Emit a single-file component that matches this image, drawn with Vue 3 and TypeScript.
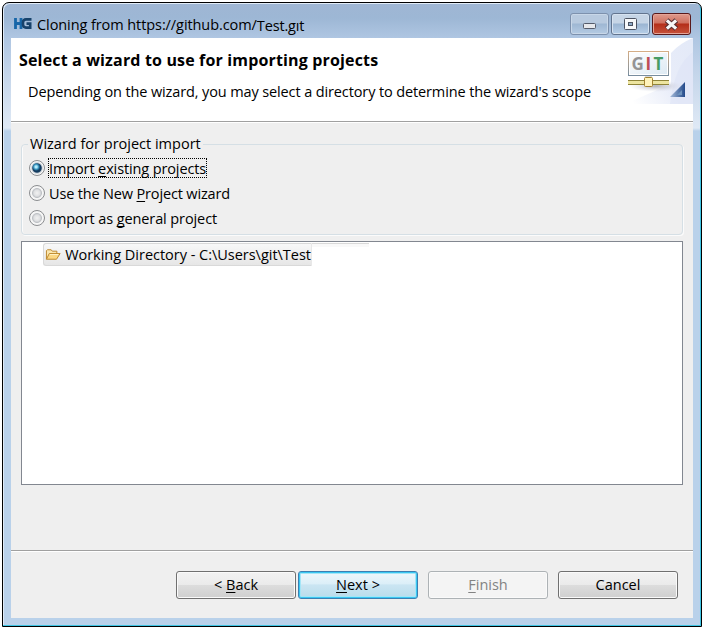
<script setup lang="ts">
import { ref } from 'vue'

interface WizardOption {
  id: string
  before: string
  key: string
  after: string
}

const options: WizardOption[] = [
  { id: 'existing', before: 'Import ', key: 'e', after: 'xisting projects' },
  { id: 'new', before: 'Use the New ', key: 'P', after: 'roject wizard' },
  { id: 'general', before: 'Import as ', key: 'g', after: 'eneral project' },
]

const selected = ref<string>('existing')
</script>

<template>
  <div class="desktop">
    <div class="window">
      <header class="titlebar">
        <svg class="app-icon" width="19" height="11" viewBox="0 0 19 11">
          <path d="M2.5 0v11M8 0v11M2 5.5h6" fill="none" stroke="#1766a8" stroke-width="2.8" />
          <path d="M18.5 1.4h-5.5q-3 0-3 3v2.2q0 3 3 3h4.2V5.6h-3.7" fill="none" stroke="#17426b" stroke-width="2.6" />
        </svg>
        <span class="title">Cloning from https://github.com/</span><span class="title repo">Test.gıt</span>
        <div class="controls">
          <button class="ctl" aria-label="Minimize">
            <svg width="15" height="14" viewBox="0 0 15 14">
              <rect x="1.5" y="6.5" width="12" height="5" rx="1" fill="#e6e8ec" stroke="#555c6b" />
            </svg>
          </button>
          <button class="ctl bright" aria-label="Maximize">
            <svg width="15" height="14" viewBox="0 0 15 14">
              <rect x="1.5" y="1.5" width="12" height="11" rx="1" fill="#f7f8fa" stroke="#4c5362" />
              <rect x="5.5" y="5.5" width="4" height="3" fill="#8eabc9" stroke="#4c5362" />
            </svg>
          </button>
          <button class="ctl close" aria-label="Close">
            <svg width="15" height="13" viewBox="0 0 15 13">
              <path d="M2.6 2.2l9.8 8.6M12.4 2.2l-9.8 8.6" stroke="#5a3033" stroke-width="5.4" />
              <path d="M2.9 2.4l9.2 8.2M12.1 2.4l-9.2 8.2" stroke="#f6f6f6" stroke-width="3.2" />
            </svg>
          </button>
        </div>
      </header>

      <main class="client">
        <section class="banner">
          <div class="banner-text">
            <h1>Select a wizard to use for importing projects</h1>
            <p>Depending on the wizard, you may select a directory to determine the wizard's scope</p>
          </div>
          <svg class="banner-art" width="72" height="66" viewBox="0 0 72 66">
            <defs>
              <linearGradient id="sky" x1="0" y1="0.8" x2="1" y2="0.2">
                <stop offset="0" stop-color="#fff" />
                <stop offset="0.5" stop-color="#e9edf9" />
                <stop offset="1" stop-color="#e4eaf8" />
              </linearGradient>
              <linearGradient id="board" x1="0" y1="0" x2="1" y2="1">
                <stop offset="0" stop-color="#fff" />
                <stop offset="1" stop-color="#dce9f3" />
              </linearGradient>
              <linearGradient id="edge" x1="0" y1="0" x2="0" y2="1">
                <stop offset="0" stop-color="#d4ad86" />
                <stop offset="1" stop-color="#788d9f" />
              </linearGradient>
              <linearGradient id="tri" x1="0" y1="0" x2="1" y2="0">
                <stop offset="0" stop-color="#a8bddb" />
                <stop offset="1" stop-color="#234a8a" />
              </linearGradient>
              <radialGradient id="shade">
                <stop offset="0" stop-color="#b0b1b8" />
                <stop offset="1" stop-color="#d8dbe7" stop-opacity="0" />
              </radialGradient>
            </defs>
            <path d="M72 0Q59 5 50 15V46L4 66H72Z" fill="url(#sky)" />
            <path d="M72 14Q54 26 49 66H72Z" fill="#dbe2f5" opacity=".5" />
            <ellipse cx="35" cy="48" rx="27" ry="6" fill="url(#shade)" />
            <rect x="7.5" y="13.5" width="40" height="24" fill="url(#board)" stroke="url(#edge)" />
            <rect x="8.5" y="14.5" width="38" height="22" fill="none" stroke="#fff" />
            <text class="git" x="10.5" y="32" fill="#949495">G</text>
            <text class="git" x="24.5" y="32" fill="#bf4d56">I</text>
            <text class="git" x="32.5" y="32" fill="#479c65">T</text>
            <path d="M7 44.5h41" stroke="#ede5a0" stroke-width="3" />
            <path d="M7 42.5h41M7 46.5h41" stroke="#8f8439" />
            <path d="M24 38h7v2h-7z" fill="#d8d8d5" />
            <rect x="23.5" y="39.5" width="8" height="9" rx="1" fill="#fff3ba" stroke="#a38331" />
            <path d="M64 44V59H49Z" fill="url(#tri)" />
            <path d="M61 52v5h-5z" fill="#6e93bd" />
          </svg>
        </section>

        <section class="body">
          <fieldset class="group">
            <legend>Wizard for project import</legend>
            <label v-for="o in options" :key="o.id" class="option" @click="selected = o.id">
              <span class="radio" :class="{ on: selected === o.id }"></span>
              <span class="caption" :class="[o.id, { focus: selected === o.id }]">{{ o.before }}<u>{{ o.key }}</u>{{ o.after }}</span>
            </label>
          </fieldset>

          <div class="tree">
            <div class="tree-row">
              <svg width="17" height="13" viewBox="0 0 17 13">
                <path d="M1.5 11.5v-9l1-1h4l1.2 1.5h4.8v3" fill="#fae6ae" stroke="#bc8528" />
                <path d="M1.5 11.5l3-6h11.4l-3.8 6z" fill="#fbd783" stroke="#bc8528" stroke-linejoin="round" />
                <path d="M5 6.5h9" stroke="#fff2c8" />
              </svg>
              <span>Working Directory - C:\Users\git\Test</span>
            </div>
            <div class="row-tail"></div>
          </div>
        </section>

        <footer class="actions">
          <button class="btn">&lt; <u>B</u>ack</button>
          <button class="btn primary"><u>N</u>ext &gt;</button>
          <button class="btn disabled" disabled><u>F</u>inish</button>
          <button class="btn cancel">Cancel</button>
        </footer>
      </main>
    </div>
  </div>
</template>

<style>
body {
  background: #fff;
}
</style>

<style scoped>
* {
  box-sizing: border-box;
}
.desktop {
  height: 627px;
  padding: 2px 0 0 2px;
  font: 14.5px/20px "Open Sans", "Noto Sans", sans-serif;
  color: #000;
}
.window {
  height: 625px;
  width: 700px;
  border: 1px solid #000;
  border-radius: 7px 7px 0 0;
  padding: 0 8px 7px;
  background: linear-gradient(#9fb6d4 0, #9db7d5 15px, #afc6e2 35px, #c4d5ea 70px, #dfe9f5 125px, #b9d1ea 128px);
  box-shadow: inset -1px -1px #3fc5e4, inset 1px 1px #e0ebf7;
}
.titlebar {
  height: 35px;
  display: flex;
  align-items: flex-start;
  padding: 0 2px;
}
.app-icon {
  margin: 15px 5px 0 0;
  flex: none;
}
.title {
  margin-top: 12px;
  letter-spacing: -0.08px;
  white-space: nowrap;
}
.repo {
  margin-top: 13px;
  letter-spacing: -0.15px;
}
.controls {
  margin: 10px 0 0 auto;
  display: flex;
  gap: 2px;
}
.ctl {
  width: 39px;
  height: 22px;
  padding: 0;
  border: 1px solid #7d91ad;
  border-radius: 3px;
  background: linear-gradient(#b8cadf 0 45%, #9eb7d3 50%, #b5cbe3);
  box-shadow: inset 0 0 0 1px #c8d7e8;
  display: flex;
  align-items: center;
  justify-content: center;
}
.ctl.bright {
  border-color: #62748e;
  background: linear-gradient(#c6d5e6 0 45%, #9bb5d2 50%, #b7cfe8);
  box-shadow: inset 0 0 0 1px #d6e2f0;
}
.ctl.close {
  border-color: #58191b;
  background: linear-gradient(#df9a8d 0, #cf705f 45%, #b42e19 50%, #c6523b);
  box-shadow: inset 0 0 0 1px #e5a497;
}
.client {
  height: 580px;
  background: #efefef;
  display: flex;
  flex-direction: column;
}
.banner {
  height: 84px;
  flex: none;
  background: #fff;
  border-bottom: 1px solid #a0a0a0;
  box-shadow: 0 1px #fff;
  display: flex;
  justify-content: space-between;
}
.banner-text {
  padding: 12px 0 0 8px;
  white-space: nowrap;
}
h1 {
  margin: 0;
  font-size: 16px;
  line-height: 20px;
  font-weight: 700;
  letter-spacing: 0.16px;
}
.banner p {
  margin: 12px 0 0 9px;
  letter-spacing: -0.12px;
}
.banner-art {
  flex: none;
}
.git {
  font: 700 17px "Open Sans", sans-serif;
}
.body {
  flex: 1;
  padding: 12px 10px 0;
}
.group {
  margin: 0;
  border: 1px solid #d5dfe5;
  border-radius: 4px;
  box-shadow: inset 1px 0 #fbfbfb, 1px 1px #fbfbfb;
  height: 101px;
  padding: 1px 0 0 7px;
}
legend {
  padding: 0 2px;
  margin-left: -1px;
  height: 20px;
}
.option {
  height: 25px;
  display: flex;
  align-items: center;
  white-space: nowrap;
}
.radio {
  width: 16px;
  height: 16px;
  margin-right: 3px;
  border: 1px solid #8b8d90;
  border-radius: 50%;
  background: radial-gradient(circle at 50% 50%, #f1f1f1 0, #dfe0e2 30%, #bfc2c6 46%, #f6f6f6 54%);
}
.radio.on {
  background:
    radial-gradient(circle at 44% 42%, #b4ebfb 0 1px, #3795c0 2.5px, transparent 4px),
    radial-gradient(circle at 50% 50%, #143c60 0 4.2px, #c6cdd3 5.2px, #f6f6f6 6.2px);
}
.caption {
  height: 20px;
  padding: 1px 0 0 1px;
  letter-spacing: -0.1px;
}
.caption.new {
  letter-spacing: -0.16px;
}
.caption.focus {
  padding: 0;
  border: 1px dotted #000;
  line-height: 20px;
  letter-spacing: -0.12px;
}
u {
  text-decoration-thickness: 1px;
  text-underline-offset: 2px;
  text-decoration-skip-ink: none;
}
.tree {
  margin-top: 6px;
  height: 244px;
  border: 1px solid #828790;
  background: #fff;
  display: flex;
  align-items: flex-start;
  padding: 1px 0 0 21px;
}
.tree-row {
  width: 269px;
  height: 23px;
  border: 1px solid #d9d9d9;
  border-right-color: #e8e8e8;
  border-radius: 3px 0 0 3px;
  background: linear-gradient(#f8f8f8, #e6e6e6);
  display: flex;
  align-items: center;
  gap: 4px;
  padding-left: 1px;
  white-space: nowrap;
  letter-spacing: -0.02px;
}
.row-tail {
  width: 57px;
  height: 4px;
  border-top: 1px solid #d9d9d9;
  background: #f9f9f9;
}
.actions {
  height: 68px;
  flex: none;
  border-top: 1px solid #a0a0a0;
  box-shadow: inset 0 1px #fff;
  display: flex;
  justify-content: flex-end;
  padding: 20px 15px 0 0;
}
.btn {
  width: 120px;
  height: 28px;
  padding: 0;
  font: inherit;
  color: #000;
  border: 1px solid #707070;
  border-radius: 3px;
  background: linear-gradient(#f2f2f2 0, #ebebeb 48%, #dddddd 50%, #cfcfcf);
  box-shadow: inset 0 0 0 1px #fafafa;
  line-height: 26px;
}
.btn.primary {
  margin: 0 10px 0 2px;
  border-color: #3c7fb1;
  background: linear-gradient(#eef7fb 0, #dceff8 45%, #cae5f2 50%, #b9dceb);
  box-shadow: inset 0 0 0 1px #39c7f2, inset 0 0 0 2px #a4e5f7;
}
.btn.disabled {
  color: #838383;
  border-color: #adb2b5;
  background: #f4f4f4;
}
.btn.cancel {
  margin-left: 10px;
}
</style>
